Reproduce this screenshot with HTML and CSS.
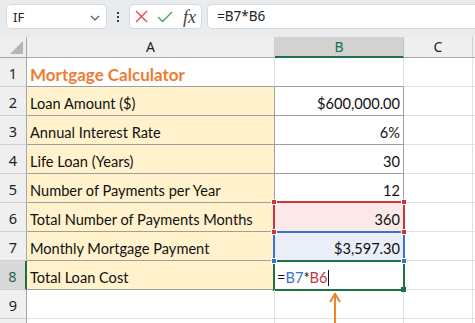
FILE: index.html
```html
<!DOCTYPE html>
<html>
<head>
<meta charset="utf-8">
<link rel="stylesheet" href="styles.css">
</head>
<body>
<div class="toolbar">
  <div class="namebox">
    <span class="name">IF</span>
    <svg class="chev" width="10" height="6" viewBox="0 0 10 6"><path d="M1 1 L5 5 L9 1" fill="none" stroke="#555" stroke-width="1.2"/></svg>
  </div>
  <div class="dots"><i></i><i></i><i></i></div>
  <div class="fxbox">
    <svg width="13" height="13" viewBox="0 0 13 13"><path d="M1 1 L12 12 M12 1 L1 12" stroke="#e04848" stroke-width="1.3" fill="none"/></svg>
    <svg width="16" height="12" viewBox="0 0 16 12"><path d="M1 6 L5.5 10.5 L15 1" stroke="#3ea35a" stroke-width="1.3" fill="none"/></svg>
    <span class="fx">fx</span>
  </div>
  <div class="formula">=B7*B6</div>
</div>

<div class="sheet">
  <div class="corner"><span class="tri"></span></div>
  <div class="colhead">A</div>
  <div class="colhead sel">B</div>
  <div class="colhead">C</div>
  <div class="colhead last"></div>

  <div class="rowhead">1</div>
  <div class="cell title dark-b">Mortgage Calculator</div>
  <div class="cell dark-b"></div>
  <div class="cell"></div>
  <div class="cell last"></div>

  <div class="rowhead">2</div>
  <div class="cell gold dark">Loan Amount ($)</div>
  <div class="cell num dark">$600,000.00</div>
  <div class="cell"></div>
  <div class="cell last"></div>

  <div class="rowhead">3</div>
  <div class="cell gold dark">Annual Interest Rate</div>
  <div class="cell num dark">6%</div>
  <div class="cell"></div>
  <div class="cell last"></div>

  <div class="rowhead">4</div>
  <div class="cell gold dark">Life Loan (Years)</div>
  <div class="cell num dark">30</div>
  <div class="cell"></div>
  <div class="cell last"></div>

  <div class="rowhead">5</div>
  <div class="cell gold dark">Number of Payments per Year</div>
  <div class="cell num dark">12</div>
  <div class="cell"></div>
  <div class="cell last"></div>

  <div class="rowhead">6</div>
  <div class="cell gold dark">Total Number of Payments Months</div>
  <div class="cell num dark ref-red">360<span class="h tl"></span><span class="h tr"></span><span class="h bl"></span><span class="h br"></span></div>
  <div class="cell"></div>
  <div class="cell last"></div>

  <div class="rowhead">7</div>
  <div class="cell gold dark">Monthly Mortgage Payment</div>
  <div class="cell num dark ref-blue">$3,597.30<span class="h bl"></span><span class="h br"></span></div>
  <div class="cell"></div>
  <div class="cell last"></div>

  <div class="rowhead active">8</div>
  <div class="cell gold dark">Total Loan Cost</div>
  <div class="cell dark editing"><span class="eq">=</span><span class="rb">B7</span><span class="eq">*</span><span class="rr">B6</span><span class="caret"></span><span class="h br small"></span>
    <svg class="arrow" width="12" height="36" viewBox="0 0 12 36"><path d="M6 35 L6 4" stroke="#f0842c" stroke-width="2" fill="none"/><path d="M1 10 L6 2 L11 10" stroke="#f0842c" stroke-width="2" fill="none"/></svg>
  </div>
  <div class="cell"></div>
  <div class="cell last"></div>

  <div class="rowhead">9</div>
  <div class="cell"></div>
  <div class="cell"></div>
  <div class="cell"></div>
  <div class="cell last"></div>

  <div class="rowhead"></div>
  <div class="cell"></div>
  <div class="cell"></div>
  <div class="cell"></div>
  <div class="cell last"></div>
</div>
</body>
</html>
```

FILE: styles.css
```css
* { box-sizing: border-box; }
html, body { margin: 0; padding: 0; background: #ffffff; overflow: hidden; }
body { width: 475px; height: 323px; font-family: "Lato", "Liberation Sans", sans-serif; }

.toolbar {
  height: 37px;
  background: #e9ecef;
  display: flex;
  align-items: flex-start;
  padding: 4px 0 0 6px;
}
.namebox {
  width: 101px;
  height: 25px;
  background: #fff;
  border: 1px solid #d6d8da;
  border-radius: 5px;
  display: flex;
  align-items: center;
  justify-content: space-between;
  padding: 0 6px 0 6px;
}
.name { font-family: "Noto Sans", sans-serif; font-size: 13px; color: #222; }
.chev { margin-top: 2px; }
.dots {
  width: 22px;
  height: 25px;
  display: flex;
  flex-direction: column;
  align-items: center;
  justify-content: center;
  gap: 2px;
}
.dots i { display: block; width: 2px; height: 2px; background: #3b3b3b; }
.fxbox {
  width: 73px;
  height: 25px;
  background: #fff;
  border: 1px solid #d6d8da;
  border-radius: 5px;
  display: flex;
  align-items: center;
  padding-left: 5px;
  gap: 9px;
}
.fx { font-family: "Liberation Serif", serif; font-style: italic; font-size: 18px; color: #444; margin-left: 1px; line-height: 1; }
.formula {
  margin-left: 5px;
  flex: 1;
  height: 25px;
  background: #fff;
  border: 1px solid #d6d8da;
  border-right: none;
  border-radius: 5px 0 0 5px;
  font-family: "Noto Sans", sans-serif;
  font-size: 13.5px;
  color: #222;
  padding-left: 9px;
  line-height: 22px;
}

.sheet {
  display: grid;
  grid-template-columns: 27px 248px 129px 69px 1fr;
  grid-template-rows: 21px repeat(10, 29px);
  height: 286px;
  overflow: hidden;
}
.corner {
  background: #efefef;
  border-right: 1px solid #a8a8a8;
  border-bottom: 1px solid #a8a8a8;
  position: relative;
}
.tri {
  position: absolute;
  right: 3px;
  bottom: 3px;
  width: 0; height: 0;
  border-left: 13px solid transparent;
  border-bottom: 13px solid #b5b5b5;
}
.colhead {
  background: #efefef;
  border-right: 1px solid #d0d0d0;
  border-bottom: 1px solid #a8a8a8;
  font-family: "Noto Sans", sans-serif;
  font-size: 14px;
  color: #222;
  text-align: center;
  line-height: 20px;
}
.colhead.sel {
  background: #d2d2d2;
  color: #1e6e48;
  border-bottom: 2px solid #1e7145;
  border-right-color: #c0c0c0;
}
.colhead.last { border-right: none; }
.rowhead {
  background: #efefef;
  border-right: 1px solid #a8a8a8;
  border-bottom: 1px solid #d0d0d0;
  font-family: "Noto Sans", sans-serif;
  font-size: 14.5px;
  color: #222;
  text-align: center;
  line-height: 30px;
}
.rowhead.active {
  background: #d9d9d9;
  color: #1e6e48;
  border-right: 2px solid #1e7145;
}
.cell {
  border-right: 1px solid #e1e1e1;
  border-bottom: 1px solid #e1e1e1;
  font-size: 14.6px;
  color: #111;
  padding: 0 3px 0 3px;
  line-height: 34px;
  white-space: nowrap;
  position: relative;
}
.cell.last { border-right: none; }
.cell.dark { border-right-color: #9e9e9e; border-bottom-color: #9e9e9e; }
.cell.dark-b { border-bottom-color: #9e9e9e; }
.cell.gold { background: #fff2cc; }
.cell.title { color: #ed7d31; font-weight: bold; font-size: 17px; line-height: 34px; }
.cell.num { text-align: right; }

.ref-red { background: #fbe8e8; }
.ref-blue { background: #e9eef8; }
.ref-red::after, .ref-blue::after, .editing::after {
  content: "";
  position: absolute;
  left: -2px; top: -2px; right: -2px; bottom: -2px;
  border: 2px solid #c8363b;
  pointer-events: none;
}
.ref-blue::after { border-color: #3a72d2; top: -1px; }
.editing::after { border-color: #1e7145; top: -1px; }

.h {
  position: absolute;
  width: 6px; height: 6px;
  background: #c8363b;
  border: 1px solid #fff;
  z-index: 2;
}
.ref-blue .h { background: #3a72d2; }
.editing .h { background: #1e7145; }
.h.tl { left: -4px; top: -4px; }
.h.tr { right: -4px; top: -4px; }
.h.bl { left: -4px; bottom: -4px; }
.h.br { right: -4px; bottom: -4px; }
.h.small { width: 5px; height: 5px; right: -3px; bottom: -3px; border: none; }

.editing { padding-left: 2px; }
.eq { color: #111; }
.rb { color: #3a72d2; }
.rr { color: #c8363b; }
.caret {
  display: inline-block;
  width: 1px;
  height: 16px;
  background: #111;
  vertical-align: -3px;
  margin-left: 1px;
}
.arrow {
  position: absolute;
  left: 54px;
  top: 31px;
  z-index: 3;
}
```
